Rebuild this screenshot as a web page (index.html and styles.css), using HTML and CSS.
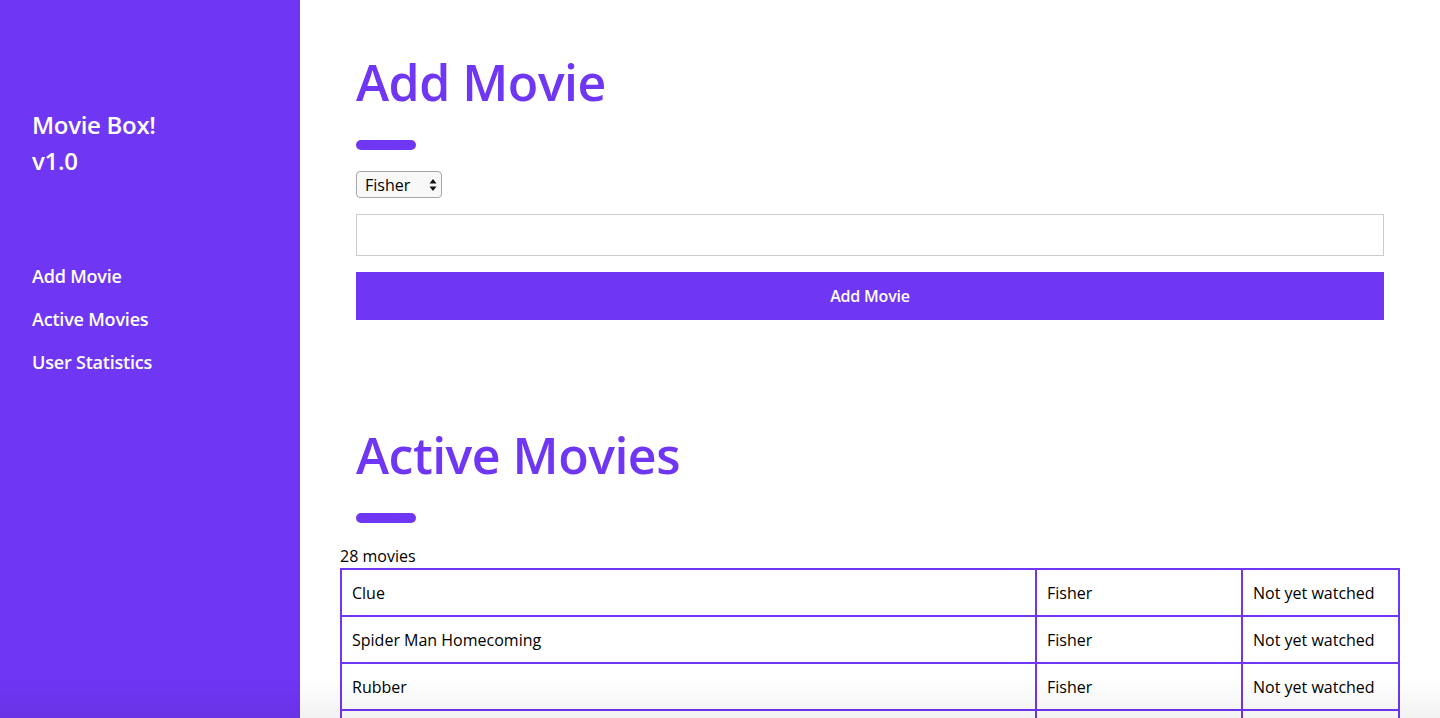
FILE: index.html
```html
<!DOCTYPE html>
<html lang="en">
<head>
<meta charset="utf-8">
<title>Movie Box!</title>
<link rel="stylesheet" href="styles.css">
</head>
<body>
<div class="app">
  <aside class="sidebar">
    <div class="brand">Movie Box!<br>v1.0</div>
    <nav class="nav">
      <a href="#add">Add Movie</a>
      <a href="#active">Active Movies</a>
      <a href="#stats">User Statistics</a>
    </nav>
  </aside>
  <main class="main">
    <section class="block" id="add">
      <h1 class="title">Add Movie</h1>
      <div class="bar"></div>
      <div class="select-wrap">
        <select class="select">
          <option>Fisher</option>
          <option>Other</option>
        </select>
        <svg class="select-arrows" width="8" height="14" viewBox="0 0 8 14"><path d="M4 1 L7.5 5.5 H0.5 Z M4 13 L7.5 8.5 H0.5 Z" fill="#111"/></svg>
      </div>
      <input class="text-input" type="text">
      <button class="btn">Add Movie</button>
    </section>
    <section class="block block-active" id="active">
      <h1 class="title">Active Movies</h1>
      <div class="bar"></div>
    </section>
    <div class="count">28 movies</div>
    <table class="movies">
      <colgroup><col class="c1"><col class="c2"><col class="c3"></colgroup>
      <tbody>
        <tr><td>Clue</td><td>Fisher</td><td>Not yet watched</td></tr>
        <tr><td>Spider Man Homecoming</td><td>Fisher</td><td>Not yet watched</td></tr>
        <tr><td>Rubber</td><td>Fisher</td><td>Not yet watched</td></tr>
        <tr><td>The Shining</td><td>Fisher</td><td>Not yet watched</td></tr>
        <tr><td>Get Out</td><td>Fisher</td><td>Not yet watched</td></tr>
      </tbody>
    </table>
  </main>
</div>
<div class="bottom-fade"></div>
</body>
</html>
```

FILE: styles.css
```css
* { box-sizing: border-box; }
html, body { margin: 0; padding: 0; }
body {
  font-family: "Open Sans", "DejaVu Sans", sans-serif;
  color: #000;
  background: #fff;
}
.app {
  display: flex;
  align-items: flex-start;
}
.sidebar {
  position: sticky;
  top: 0;
  width: 300px;
  flex: 0 0 300px;
  height: 100vh;
  background: #6f36f3;
  color: #fff;
  padding: 107px 32px 0;
}
.brand {
  font-size: 24px;
  font-weight: 600;
  line-height: 36px;
  letter-spacing: -0.3px;
}
.nav {
  display: flex;
  flex-direction: column;
  gap: 16px;
  margin-top: 84px;
}
.nav a {
  color: #fff;
  text-decoration: none;
  font-size: 18px;
  font-weight: 600;
  line-height: 27px;
  letter-spacing: -0.2px;
}
.main {
  flex: 1;
  padding: 40px 40px 80px;
}
.block {
  padding: 0 16px;
}
.title {
  margin: 0;
  font-size: 50px;
  font-weight: 600;
  line-height: 84px;
  color: #6f36f3;
  letter-spacing: -0.5px;
}
.bar {
  width: 60px;
  height: 10px;
  border-radius: 5px;
  background: #6f36f3;
  margin-top: 16px;
}
.select-wrap {
  position: relative;
  display: inline-block;
  margin-top: 21px;
}
.select {
  appearance: none;
  -webkit-appearance: none;
  width: 86px;
  height: 27px;
  border: 1px solid #a6a6a6;
  border-radius: 4px;
  background: #f8f8f8;
  font-family: inherit;
  font-size: 16px;
  color: #000;
  padding: 0 0 0 8px;
  display: block;
}
.select-arrows {
  position: absolute;
  right: 5px;
  top: 7px;
  pointer-events: none;
}
.text-input {
  display: block;
  width: 100%;
  height: 42px;
  margin-top: 16px;
  border: 1px solid #cccccc;
  background: #fff;
  font-family: inherit;
  font-size: 16px;
  padding: 0 10px;
}
.btn {
  display: block;
  width: 100%;
  height: 48px;
  margin-top: 16px;
  border: 0;
  background: #6f36f3;
  color: #fff;
  font-family: inherit;
  font-size: 16px;
  font-weight: 600;
  letter-spacing: -0.2px;
}
.block-active {
  margin-top: 93px;
}
.count {
  margin-top: 21px;
  font-size: 16px;
  line-height: 24px;
}
.movies {
  width: calc(100% - 2px);
  border-collapse: collapse;
  table-layout: fixed;
}
.movies col.c1 { width: 695px; }
.movies col.c2 { width: 206px; }
.movies col.c3 { width: 157px; }
.movies td {
  border: 2px solid #6f36f3;
  height: 47px;
  padding: 0 10px;
  font-size: 16px;
  white-space: nowrap;
}
.bottom-fade {
  position: fixed;
  left: 0;
  right: 0;
  bottom: 0;
  height: 40px;
  background: linear-gradient(to bottom, rgba(0,0,0,0), rgba(0,0,0,0.05));
  pointer-events: none;
}
```
